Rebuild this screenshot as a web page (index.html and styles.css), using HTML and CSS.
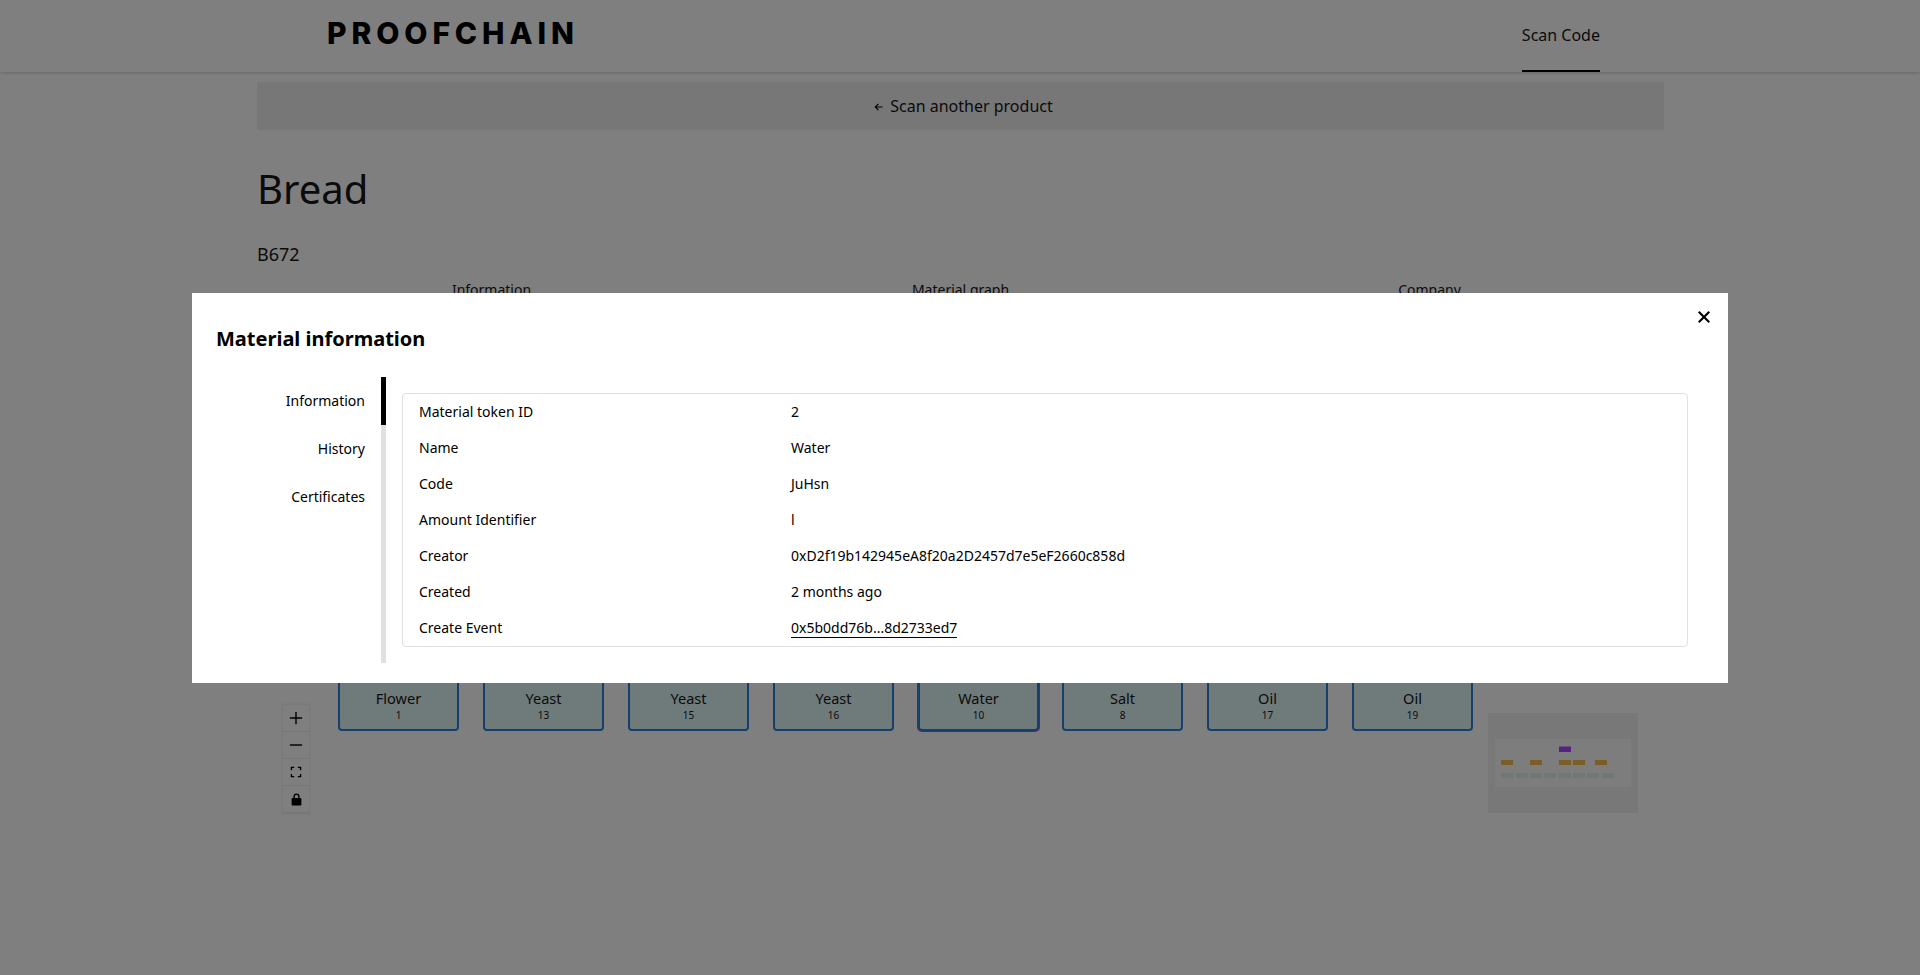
FILE: index.html
```html
<!DOCTYPE html>
<html lang="en">
<head>
    <meta charset="UTF-8">
    <meta name="viewport" content="width=device-width, initial-scale=1.0">
    <title>Proofchain</title>
    <link rel="stylesheet" href="styles.css">
</head>
<body>

    <header class="topbar">
        <div class="logo">PROOFCHAIN</div>
        <nav class="topnav">
            <a class="topnav-link">Scan Code</a>
        </nav>
    </header>

    <main class="content">
        <a class="back-bar">
            <svg class="back-arrow" viewBox="0 0 9 8" width="9" height="8"><path d="M4 0.500 4.800 1.300 2.700 3.400H8.500V4.600H2.700L4.800 6.700 4 7.500 0.500 4z"/></svg>
            Scan another product
        </a>
        <h1 class="product-name">Bread</h1>
        <p class="product-code">B672</p>

        <div class="tabs">
            <div class="tab">Information</div>
            <div class="tab">Material graph</div>
            <div class="tab">Company</div>
        </div>

        <!-- Material graph canvas -->
        <div class="graph">
            <div class="node" style="left: 81px"><span>Flower</span><small>1</small></div>
            <div class="node" style="left: 226px"><span>Yeast</span><small>13</small></div>
            <div class="node" style="left: 371px"><span>Yeast</span><small>15</small></div>
            <div class="node" style="left: 516px"><span>Yeast</span><small>16</small></div>
            <div class="node node-selected" style="left: 661px"><span>Water</span><small>10</small></div>
            <div class="node" style="left: 805px"><span>Salt</span><small>8</small></div>
            <div class="node" style="left: 950px"><span>Oil</span><small>17</small></div>
            <div class="node" style="left: 1095px"><span>Oil</span><small>19</small></div>

            <div class="controls">
                <button class="control">
                    <svg viewBox="0 0 16 16" width="14" height="14"><path d="M7.200 1h1.600v6.200H15v1.600H8.800V15H7.200V8.800H1V7.200h6.200z"/></svg>
                </button>
                <button class="control">
                    <svg viewBox="0 0 16 16" width="14" height="14"><path d="M1 7.200h14v1.600H1z"/></svg>
                </button>
                <button class="control">
                    <svg viewBox="0 0 16 16" width="12" height="12"><path d="M1 1h4.500v1.800H2.800v2.700H1zM10.500 1H15v4.500h-1.800V2.800h-2.700zM1 10.500h1.800v2.700h2.700V15H1zM13.200 10.500H15V15h-4.500v-1.800h2.700z"/></svg>
                </button>
                <button class="control">
                    <svg viewBox="0 0 16 16" width="13" height="13"><path d="M8 0.500a3.800 3.800 0 0 0-3.800 3.800V6H3a1 1 0 0 0-1 1v7.500a1 1 0 0 0 1 1h10a1 1 0 0 0 1-1V7a1 1 0 0 0-1-1h-1.200V4.300A3.800 3.800 0 0 0 8 0.500zM5.900 4.300a2.100 2.100 0 0 1 4.200 0V6H5.900z"/></svg>
                </button>
            </div>

            <svg class="minimap" viewBox="0 0 150 100" width="150" height="100">
                <rect class="mini-mask" width="150" height="100"/>
                <rect class="mini-view" x="7" y="26" width="136" height="48"/>
                <rect class="mini-top" x="71" y="33.500" width="12" height="5.500"/>
                <rect class="mini-mid" x="13" y="47" width="12" height="5"/>
                <rect class="mini-mid" x="42" y="47" width="12" height="5"/>
                <rect class="mini-mid" x="71" y="47" width="12" height="5"/>
                <rect class="mini-mid" x="85" y="47" width="12" height="5"/>
                <rect class="mini-mid" x="107" y="47" width="12" height="5"/>
                <rect class="mini-low" x="13" y="60" width="12" height="5"/>
                <rect class="mini-low" x="28" y="60" width="12" height="5"/>
                <rect class="mini-low" x="42" y="60" width="12" height="5"/>
                <rect class="mini-low" x="56" y="60" width="12" height="5"/>
                <rect class="mini-low" x="71" y="60" width="12" height="5"/>
                <rect class="mini-low" x="85" y="60" width="12" height="5"/>
                <rect class="mini-low" x="99" y="60" width="12" height="5"/>
                <rect class="mini-low" x="114" y="60" width="12" height="5"/>
            </svg>
        </div>
    </main>

    <!-- Material information modal -->
    <div class="overlay">
        <div class="modal">
            <button class="modal-close">
                <svg viewBox="0 0 12 12" width="12" height="12"><path d="M1.500 0 6 4.500 10.500 0 12 1.500 7.500 6 12 10.500 10.500 12 6 7.500 1.500 12 0 10.500 4.500 6 0 1.500z"/></svg>
            </button>
            <h2 class="modal-title">Material information</h2>
            <div class="modal-body">
                <ul class="side-tabs">
                    <li class="side-tab side-tab-active">Information</li>
                    <li class="side-tab">History</li>
                    <li class="side-tab">Certificates</li>
                </ul>
                <div class="info-box">
                    <div class="info-row"><span class="info-label">Material token ID</span><span>2</span></div>
                    <div class="info-row"><span class="info-label">Name</span><span>Water</span></div>
                    <div class="info-row"><span class="info-label">Code</span><span>JuHsn</span></div>
                    <div class="info-row"><span class="info-label">Amount Identifier</span><span>l</span></div>
                    <div class="info-row"><span class="info-label">Creator</span><span>0xD2f19b142945eA8f20a2D2457d7e5eF2660c858d</span></div>
                    <div class="info-row"><span class="info-label">Created</span><span>2 months ago</span></div>
                    <div class="info-row"><span class="info-label">Create Event</span><a class="info-link">0x5b0dd76b...8d2733ed7</a></div>
                </div>
            </div>
        </div>
    </div>

</body>
</html>
```

FILE: styles.css
```css
* {
    box-sizing: border-box;
}

html,
body {
    height: 100%;
}

body {
    margin: 0;
    background-color: #ffffff;
    color: #161616;
    font-family: "Noto Sans", sans-serif;
    font-size: 14px;
    overflow: hidden;
}

/* Top bar */
.topbar {
    display: flex;
    justify-content: space-between;
    height: 72px;
    padding: 0 320px 0 327px;
    background-color: #ffffff;
    box-shadow: 0 1px 3px rgba(0, 0, 0, 0.2);
}

.logo {
    margin-top: 15px;
    color: #000000;
    font-family: Inter, sans-serif;
    font-size: 30px;
    font-weight: 800;
    line-height: 36px;
    letter-spacing: 4.900px;
}

.topnav {
    display: flex;
}

.topnav-link {
    display: flex;
    align-items: center;
    height: 72px;
    border-bottom: 2px solid #000000;
    font-size: 16px;
}

/* Page content */
.content {
    position: relative;
    width: 1407px;
    margin-left: 257px;
    padding-top: 10px;
}

.back-bar {
    display: flex;
    align-items: center;
    justify-content: center;
    gap: 7px;
    height: 48px;
    padding-left: 6px;
    background-color: #eeeeee;
    font-size: 16px;
}

.back-arrow {
    margin-top: 1px;
}

.product-name {
    margin: 31px 0 0;
    font-size: 40px;
    font-weight: 400;
    line-height: 56px;
}

.product-code {
    margin: 25px 0 0;
    font-size: 18px;
    line-height: 25px;
}

.tabs {
    display: grid;
    grid-template-columns: repeat(3, 1fr);
    margin-top: 13px;
}

.tab {
    font-size: 14px;
    line-height: 20px;
    text-align: center;
}

/* Material graph */
.graph {
    position: absolute;
    top: 300px;
    left: 0;
    width: 100%;
    height: 560px;
}

.node {
    position: absolute;
    top: 288px;
    display: flex;
    flex-direction: column;
    align-items: center;
    justify-content: flex-end;
    width: 121px;
    height: 71px;
    padding-bottom: 9px;
    background-color: #dff4f4;
    border: 2px solid #2f7fd8;
    border-radius: 4px;
    font-size: 14.500px;
    line-height: 14px;
}

.node span {
    margin-bottom: 4px;
    line-height: 16px;
}

.node small {
    font-size: 10px;
    line-height: 10px;
}

.node-selected {
    box-shadow: 0 0 0 1px #ff2d8f;
}

.controls {
    position: absolute;
    top: 333px;
    left: 26px;
    display: flex;
    flex-direction: column;
    box-shadow: 0 0 2px 1px rgba(0, 0, 0, 0.08);
}

.control {
    display: flex;
    align-items: center;
    justify-content: center;
    width: 26px;
    height: 27px;
    padding: 0;
    background-color: #fefefe;
    border: none;
    border-bottom: 1px solid #eeeeee;
}

.minimap {
    position: absolute;
    top: 341px;
    right: 26px;
}

.mini-mask {
    fill: #f0f0f0;
}

.mini-view {
    fill: #fafafa;
}

.mini-top {
    fill: #aa46ff;
}

.mini-mid {
    fill: #f5bd4a;
}

.mini-low {
    fill: #e0eef2;
}

/* Modal */
.overlay {
    position: fixed;
    top: 0;
    left: 0;
    width: 100%;
    height: 100%;
    background-color: rgba(0, 0, 0, 0.5);
}

.modal {
    position: absolute;
    top: 293px;
    left: 192px;
    width: 1536px;
    height: 390px;
    padding: 32px 24px 0;
    background-color: #ffffff;
    color: #000000;
}

.modal-close {
    position: absolute;
    top: 18px;
    right: 18px;
    display: flex;
    padding: 0;
    background: none;
    border: none;
}

.modal-title {
    margin: 0;
    font-size: 20px;
    font-weight: 700;
    line-height: 28px;
}

.modal-body {
    display: flex;
    margin-top: 24px;
}

.side-tabs {
    flex: none;
    width: 170px;
    height: 286px;
    margin: 0;
    padding: 0;
    list-style: none;
    border-right: 5px solid #e0e0e0;
}

.side-tab {
    height: 48px;
    margin-right: -5px;
    padding-right: 16px;
    border-right: 5px solid transparent;
    line-height: 47px;
    text-align: right;
}

.side-tab-active {
    border-right-color: #000000;
}

.info-box {
    flex: 1;
    height: 254px;
    margin: 16px 16px 0;
    padding: 0 16px;
    border: 1px solid #e0e0e0;
    border-radius: 4px;
}

.info-row {
    display: flex;
    height: 36px;
    line-height: 36px;
}

.info-label {
    flex: none;
    width: 372px;
}

.info-link {
    height: 28px;
    border-bottom: 1px solid #000000;
    line-height: 35px;
}
```
